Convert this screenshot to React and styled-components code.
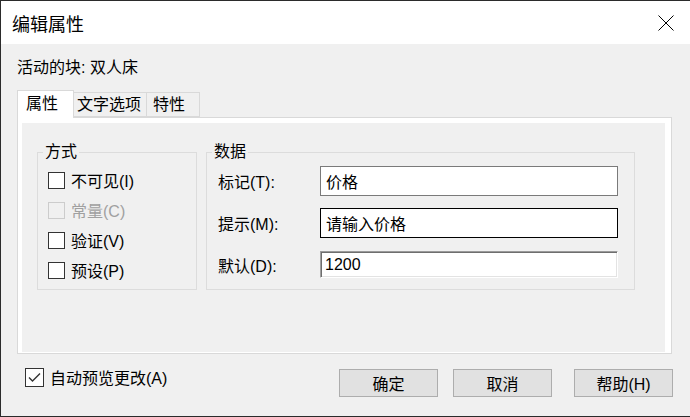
import React from "react";
import styled, { createGlobalStyle } from "styled-components";

const GlobalStyle = createGlobalStyle`
  html, body {
    margin: 0;
    padding: 0;
    background: #f0f0f0;
  }
  body {
    font-family: "Liberation Sans", "Noto Sans CJK SC", sans-serif;
    font-size: 16px;
    color: #000;
  }
`;

const Window = styled.div`
  width: 690px;
  height: 417px;
  box-sizing: border-box;
  border: 1px solid #2b2b2b;
  border-right: none;
  background: #f0f0f0;
  display: flex;
  flex-direction: column;
  overflow: hidden;
`;

const TitleBar = styled.div`
  height: 43px;
  flex: none;
  background: #fff;
  display: flex;
  align-items: center;
  padding-left: 11px;
  padding-right: 16px;
`;

const Title = styled.div`
  font-family: "Noto Sans CJK SC", sans-serif;
  font-size: 18px;
  line-height: 24px;
  flex: 1;
`;

const CloseButton = styled.div`
  width: 16px;
  height: 16px;
  display: flex;
`;

const Body = styled.div`
  flex: 1;
  display: flex;
  flex-direction: column;
  padding: 14px 0 0 16px;
`;

const ActiveBlock = styled.div`
  line-height: 20px;
  height: 20px;
  font-size: 16px;
`;

const TabStrip = styled.div`
  display: flex;
  align-items: flex-end;
  height: 27px;
  margin-top: 12px;
  position: relative;
  z-index: 1;
`;

const Tab = styled.div`
  width: ${(p) => p.$w}px;
  box-sizing: border-box;
  height: ${(p) => (p.$active ? 28 : 25)}px;
  margin-bottom: ${(p) => (p.$active ? -1 : 0)}px;
  background: ${(p) => (p.$active ? "#fff" : "#f0f0f0")};
  border: 1px solid #d9d9d9;
  border-bottom: ${(p) => (p.$active ? "none" : "1px solid #d9d9d9")};
  border-left: ${(p) => (p.$first || p.$active ? "1px solid #d9d9d9" : "none")};
  font-size: 16px;
  line-height: ${(p) => (p.$active ? 26 : 23)}px;
  padding-left: ${(p) => p.$pad}px;
  white-space: nowrap;
`;

const Panel = styled.div`
  width: 655px;
  height: 237px;
  box-sizing: border-box;
  border: 1px solid #d9d9d9;
  background: #fff;
  padding: 5px 6px 1px 4px;
  display: flex;
`;

const Page = styled.div`
  flex: 1;
  background: #f0f0f0;
  display: flex;
  align-items: flex-start;
  gap: 9px;
  padding: 19px 0 0 15px;
`;

const Group = styled.fieldset`
  margin: 0;
  box-sizing: border-box;
  width: ${(p) => p.$w}px;
  border: 1px solid #dcdcdc;
  padding: ${(p) => p.$pad};
  min-width: 0;
`;

const Legend = styled.legend`
  padding: 0 2px;
  margin-left: ${(p) => p.$ml}px;
  font-size: 16px;
  line-height: 20px;
`;

const CheckRow = styled.label`
  display: flex;
  align-items: center;
  height: 30px;
  color: ${(p) => (p.$disabled ? "#a0a0a0" : "#000")};
  font-size: 16px;
  white-space: nowrap;
`;

const Box = styled.span`
  width: ${(p) => p.$size || 17}px;
  height: ${(p) => p.$size || 17}px;
  box-sizing: border-box;
  border: 1px solid ${(p) => (p.$disabled ? "#cccccc" : "#333333")};
  background: ${(p) => (p.$disabled ? "#f0f0f0" : "#fff")};
  margin-right: 6px;
  flex: none;
  display: flex;
  align-items: center;
  justify-content: center;
`;

const FieldRow = styled.div`
  display: flex;
  align-items: center;
  margin-top: ${(p) => p.$mt || 0}px;
`;

const FieldLabel = styled.div`
  width: 102px;
  font-size: 16px;
  white-space: nowrap;
`;

const TextBox = styled.div`
  width: 298px;
  height: ${(p) => p.$h}px;
  box-sizing: border-box;
  background: #fff;
  border: 1px solid ${(p) => (p.$focus ? "#000" : "#7a7a7a")};
  padding-left: 5px;
  display: flex;
  align-items: center;
  font-size: 16px;
  white-space: nowrap;
`;

const SunkenBox = styled(TextBox)`
  border: 1px solid;
  border-color: #9a9a9a #fff #fff #a0a0a0;
  box-shadow: inset 1px 1px 0 #6e6e6e, inset -1px -1px 0 #e3e3e3;
  padding-left: 4px;
`;

const Footer = styled.div`
  display: flex;
  align-items: flex-start;
  padding: 15px 17px 0 8px;
`;

const PreviewCheck = styled.label`
  display: flex;
  align-items: center;
  margin-top: -3px;
  font-size: 16px;
  height: 22px;
  white-space: nowrap;
`;

const Buttons = styled.div`
  margin-left: auto;
  display: flex;
`;

const Button = styled.div`
  width: 99px;
  height: 28px;
  box-sizing: border-box;
  background: #e1e1e1;
  border: 1px solid #adadad;
  display: flex;
  align-items: center;
  justify-content: center;
  font-size: 16px;
  margin-left: ${(p) => p.$ml || 0}px;
`;

const tabs = [
  { label: "属性", w: 57, pad: 8, active: true },
  { label: "文字选项", w: 73, pad: 3 },
  { label: "特性", w: 53, pad: 6 },
];

const options = [
  { label: "不可见(I)" },
  { label: "常量(C)", disabled: true },
  { label: "验证(V)" },
  { label: "预设(P)" },
];

export default function App() {
  return (
    <>
      <GlobalStyle />
      <Window>
        <TitleBar>
          <Title>编辑属性</Title>
          <CloseButton>
            <svg width="16" height="16" viewBox="0 0 16 16">
              <path d="M0.5 0.5 L15.5 15.5 M15.5 0.5 L0.5 15.5" stroke="#000" strokeWidth="1" fill="none" />
            </svg>
          </CloseButton>
        </TitleBar>
        <Body>
          <ActiveBlock>活动的块: 双人床</ActiveBlock>
          <TabStrip>
            {tabs.map((t, i) => (
              <Tab key={t.label} $w={t.w} $pad={t.pad} $active={t.active} $first={i === 0}>
                {t.label}
              </Tab>
            ))}
          </TabStrip>
          <Panel>
            <Page>
              <Group $w={160} $pad="3px 4px 4px 10px">
                <Legend $ml={-5}>方式</Legend>
                {options.map((o) => (
                  <CheckRow key={o.label} $disabled={o.disabled}>
                    <Box $disabled={o.disabled} />
                    {o.label}
                  </CheckRow>
                ))}
              </Group>
              <Group $w={429} $pad="4px 16px 11px 11px">
                <Legend $ml={-6}>数据</Legend>
                <FieldRow>
                  <FieldLabel>标记(T):</FieldLabel>
                  <TextBox $h={30}>价格</TextBox>
                </FieldRow>
                <FieldRow $mt={12}>
                  <FieldLabel>提示(M):</FieldLabel>
                  <TextBox $h={30} $focus>请输入价格</TextBox>
                </FieldRow>
                <FieldRow $mt={13}>
                  <FieldLabel>默认(D):</FieldLabel>
                  <SunkenBox $h={27}>1200</SunkenBox>
                </FieldRow>
              </Group>
            </Page>
          </Panel>
          <Footer>
            <PreviewCheck>
              <Box $size={19}>
                <svg width="13" height="11" viewBox="0 0 13 11">
                  <path d="M1 5.5 L4.5 9 L12 1.5" stroke="#333" strokeWidth="1.4" fill="none" />
                </svg>
              </Box>
              自动预览更改(A)
            </PreviewCheck>
            <Buttons>
              <Button>确定</Button>
              <Button $ml={15}>取消</Button>
              <Button $ml={22}>帮助(H)</Button>
            </Buttons>
          </Footer>
        </Body>
      </Window>
    </>
  );
}
